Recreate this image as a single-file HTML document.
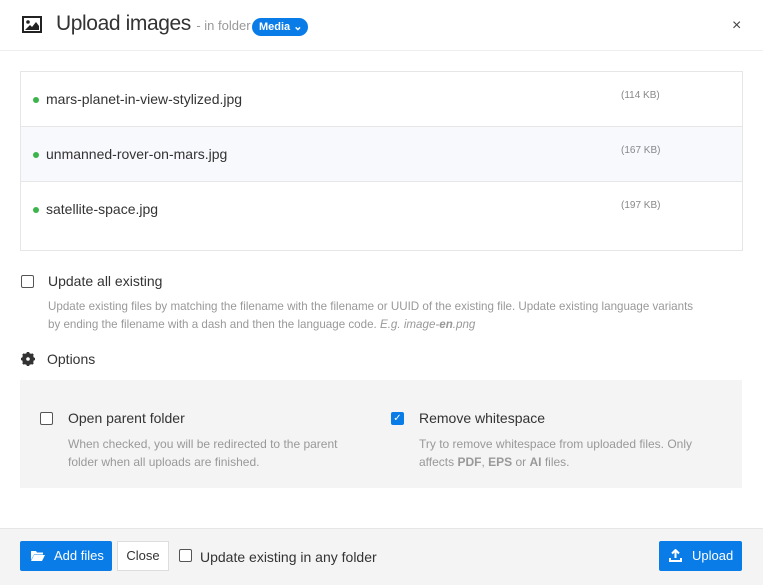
<!DOCTYPE html><html><head><style>
body{margin:0;width:763px;height:584px;background:#fff;font-family:"Liberation Sans",sans-serif;color:#333;position:relative;overflow:hidden}
.a{position:absolute}
.cb{position:absolute;width:11px;height:11px;border:1.5px solid #555;border-radius:2px;background:#fff}
.row{position:absolute;left:21px;width:721px;height:55px;font-size:14px}
.row .d{position:absolute;left:12px;top:25px;width:6px;height:6px;border-radius:50%;background:#3bb44a}
.row .n{position:absolute;left:25px;top:19px}
.row .s{position:absolute;left:600px;top:18px;font-size:10px;color:#888}
.ln{position:absolute;left:21px;width:721px;height:1px;background:#e6e6e6}
.help{font-size:12px;color:#999;line-height:18px}
.btn{position:absolute;top:541px;height:30px;background:#0a7ce8;color:#fff;font-size:13px;border-radius:2px}
</style></head><body>
<svg class="a" style="left:22px;top:16px" width="20" height="17" viewBox="0 0 20 17"><rect x="1" y="1" width="18" height="15" fill="none" stroke="#222" stroke-width="2"/><circle cx="6" cy="6" r="1.8" fill="#222"/><path d="M3 14 L8 9 L10 11 L14 6 L17 10 L17 14Z" fill="#222"/></svg>
<div class="a" style="left:56px;top:12px;font-size:21px;color:#333;letter-spacing:-0.4px">Upload images <span style="font-size:13px;color:#999;letter-spacing:0">- in folder</span></div>
<div class="a" style="left:252px;top:18px;width:56px;height:18px;border-radius:9px;background:#0a7ce8;color:#fff;font-size:11px;font-weight:bold;line-height:18px;text-indent:7px">Media ⌄</div>
<div class="a" style="left:732px;top:17px;font-size:16px;color:#444">×</div>
<div class="a" style="left:0;top:50px;width:763px;height:1px;background:#eee"></div>
<div class="a" style="left:20px;top:71px;width:721px;height:178px;border:1px solid #e6e6e6"></div>
<div class="row" style="top:72px"><div class="d"></div><div class="n">mars-planet-in-view-stylized.jpg</div><div class="s">(114 KB)</div></div>
<div class="row" style="top:127px;background:#f7f9fc"><div class="d"></div><div class="n">unmanned-rover-on-mars.jpg</div><div class="s">(167 KB)</div></div>
<div class="row" style="top:182px"><div class="d"></div><div class="n">satellite-space.jpg</div><div class="s">(197 KB)</div></div>
<div class="ln" style="top:126px"></div><div class="ln" style="top:181px"></div>
<div class="cb" style="left:21px;top:275px"></div>
<div class="a" style="left:48px;top:273px;font-size:14px">Update all existing</div>
<div class="a help" style="left:48px;top:298px;width:650px;font-size:11.6px">Update existing files by matching the filename with the filename or UUID of the existing file. Update existing language variants by ending the filename with a dash and then the language code. <i>E.g. image-<b>en</b>.png</i></div>
<svg class="a" style="left:21px;top:352px" width="14" height="14" viewBox="0 0 14 14"><circle cx="7" cy="7" r="4.5" fill="none" stroke="#333" stroke-width="3"/><g stroke="#333" stroke-width="2.6"><path d="M7 0v14M0 7h14M2 2l10 10M12 2L2 12"/></g><circle cx="7" cy="7" r="1.8" fill="#fff"/></svg>
<div class="a" style="left:47px;top:351px;font-size:14px">Options</div>
<div class="a" style="left:20px;top:380px;width:722px;height:108px;background:#f4f4f4"></div>
<div class="cb" style="left:40px;top:412px"></div>
<div class="a" style="left:68px;top:410px;font-size:14px">Open parent folder</div>
<div class="a help" style="left:68px;top:435px;width:290px">When checked, you will be redirected to the parent folder when all uploads are finished.</div>
<div class="cb" style="left:391px;top:412px;background:#0a7ce8;border-color:#0a7ce8;color:#fff;font-size:10px;line-height:11px;text-align:center">✓</div>
<div class="a" style="left:419px;top:410px;font-size:14px">Remove whitespace</div>
<div class="a help" style="left:419px;top:435px;width:300px">Try to remove whitespace from uploaded files. Only affects <b>PDF</b>, <b>EPS</b> or <b>AI</b> files.</div>
<div class="a" style="left:0;top:528px;width:763px;height:56px;background:#f4f4f4;border-top:1px solid #e6e6e6"></div>
<div class="btn" style="left:20px;width:92px"><svg class="a" style="left:11px;top:9px" width="14" height="11" viewBox="0 0 14 11"><path d="M0 1h5l1 1.5h6v2H3L0 10Z M3 5h11l-3 6H0Z" fill="#fff"/></svg><span class="a" style="left:34px;top:7px">Add files</span></div>
<div class="a" style="left:117px;top:541px;width:50px;height:28px;background:#fff;border:1px solid #ddd;font-size:13px;line-height:28px;text-align:center">Close</div>
<div class="cb" style="left:179px;top:549px"></div>
<div class="a" style="left:200px;top:549px;font-size:14px">Update existing in any folder</div>
<div class="btn" style="left:659px;width:83px"><svg class="a" style="left:10px;top:8px" width="13" height="13" viewBox="0 0 13 13"><path d="M6.5 1v8M3 4.5l3.5-3.5 3.5 3.5M1 9v3h11V9" fill="none" stroke="#fff" stroke-width="2"/></svg><span class="a" style="left:33px;top:7px">Upload</span></div>
</body></html>
